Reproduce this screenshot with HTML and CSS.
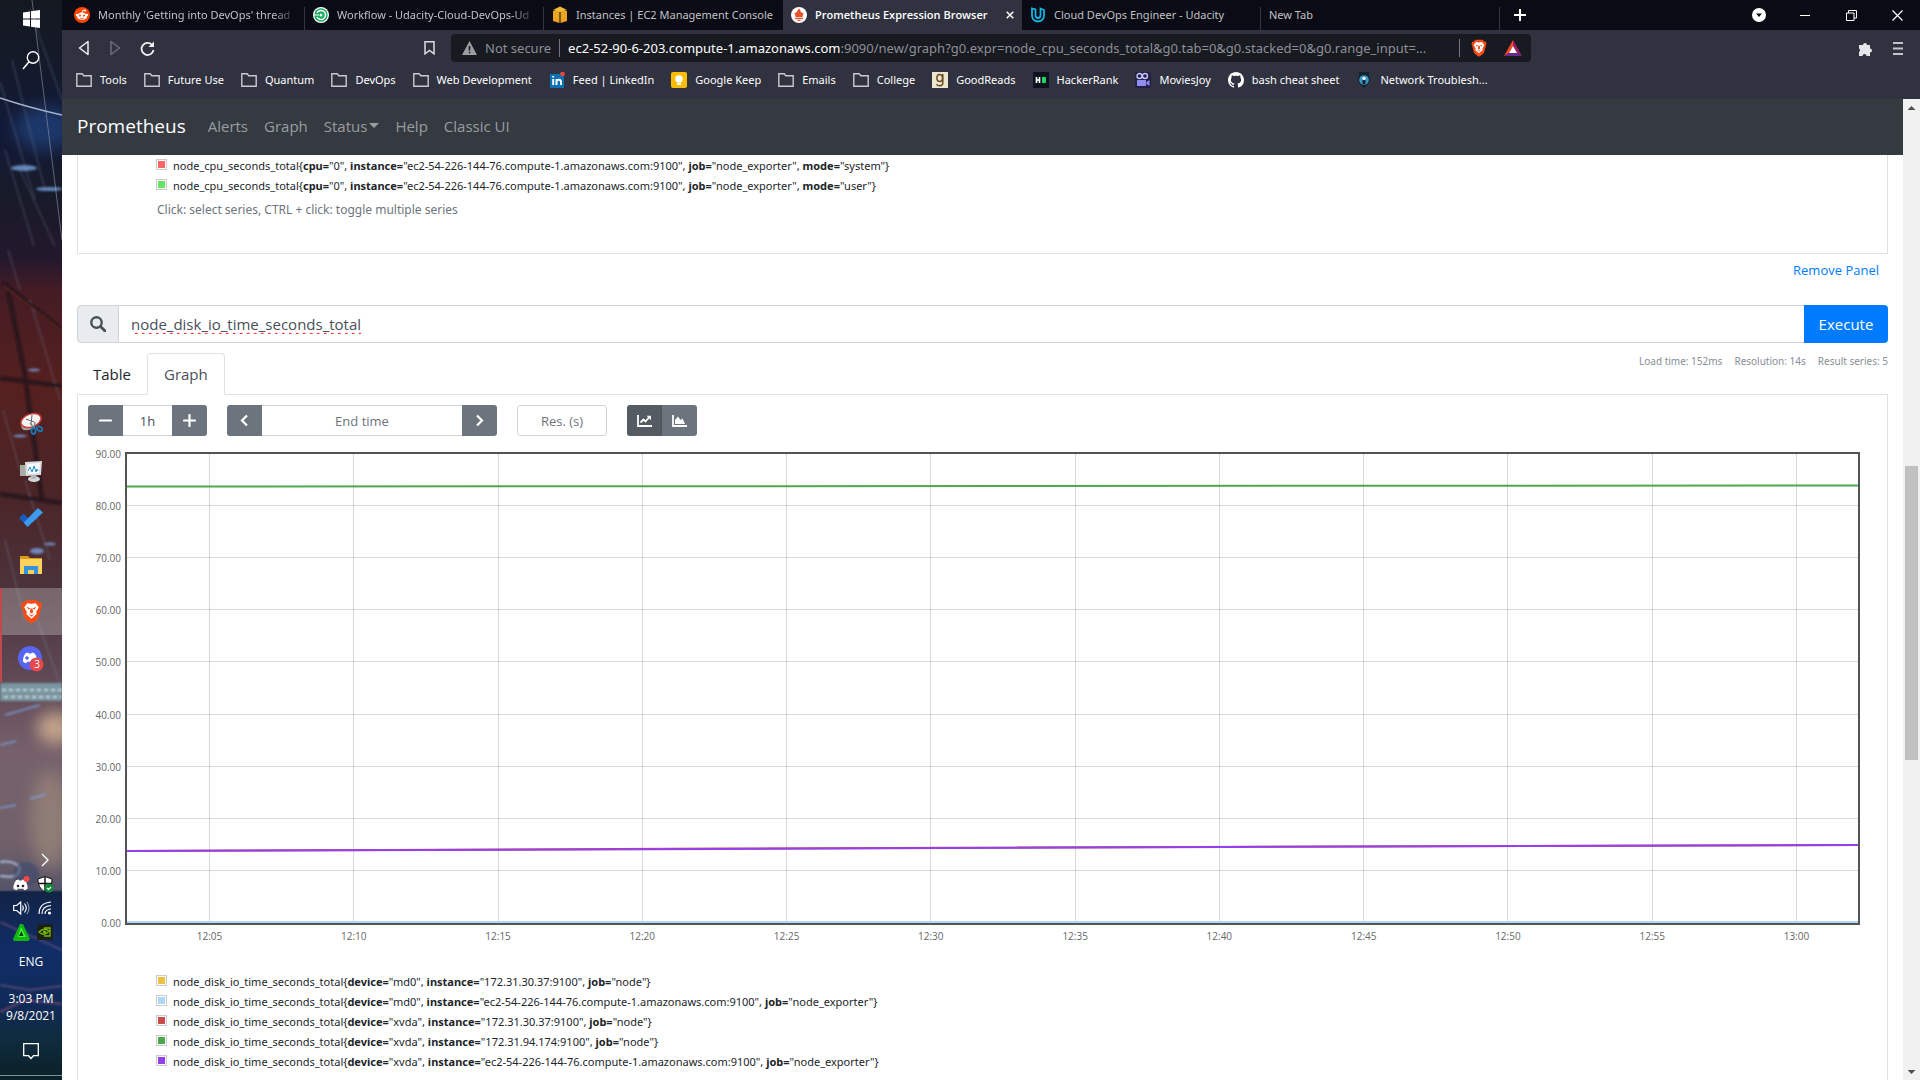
FILE: index.html
```html
<!DOCTYPE html>
<html lang="en">
<head>
<meta charset="utf-8">
<title>Prometheus Expression Browser</title>
<link rel="stylesheet" href="styles.css">
</head>
<body>
<svg class="defs" aria-hidden="true">
  <symbol id="folder" viewBox="0 0 16 16"><path d="M.8 14.2V1.8h5.4l1.6 2h7.4v10.4z" fill="none" stroke="#c8cad2" stroke-width="1.4"/></symbol>
  <symbol id="brave" viewBox="0 0 20 24"><path d="M5 1h10l2 2.500 2-.3 1 3-1 3-2 8-2 3-5 3.500-5-3.500-2-3-2-8-1-3 1-3 2 .3z" fill="#fb4b14"/><path d="M10 4.500 14 4l3 4-2.500 4.500.5 2L10 19l-5-4.500.5-2L3 8l3-4z" fill="#fff"/><path d="M5.500 7.500 9 9l-2 1zM14.500 7.500 11 9l2 1zM9 9h2l.5 4-1.500 1-1.500-1zM7 14l3 1.500 3-1.500-3 3z" fill="#fb4b14"/></symbol>
  <symbol id="discord" viewBox="0 0 20 16"><path d="M4 1.500 7.500.5 8.200 2h3.600l.7-1.500L16 1.500c2.500 3.500 3.500 7 3.500 11-1.500 1.300-3 2-4.500 2.500l-1.300-2H6.300L5 15c-1.500-.5-3-1.200-4.500-2.500 0-4 1-7.500 3.500-11z" fill="#fff"/></symbol>
</svg>
<div class="desktop">
  <aside class="taskbar">
    <svg class="wallpaper" viewBox="0 0 62 1080" preserveAspectRatio="none" aria-hidden="true">
      <defs>
        <linearGradient id="sky" x1="0" y1="0" x2="0" y2="1">
          <stop offset="0" stop-color="#141820"/><stop offset=".06" stop-color="#141a2a"/><stop offset=".12" stop-color="#131a38"/>
          <stop offset=".18" stop-color="#171a28"/><stop offset=".24" stop-color="#24182c"/><stop offset=".27" stop-color="#451c24"/>
          <stop offset=".36" stop-color="#55201f"/><stop offset=".46" stop-color="#4a2528"/><stop offset=".55" stop-color="#4c343c"/>
          <stop offset=".63" stop-color="#604a56"/><stop offset=".7" stop-color="#76616c"/><stop offset=".78" stop-color="#716069"/>
          <stop offset=".824" stop-color="#57546a"/><stop offset=".826" stop-color="#122446"/><stop offset=".88" stop-color="#112d68"/>
          <stop offset=".93" stop-color="#102a58"/><stop offset=".96" stop-color="#0f2c3e"/><stop offset="1" stop-color="#0b2029"/>
        </linearGradient>
        <filter id="soft" x="-50%" y="-50%" width="200%" height="200%"><feGaussianBlur stdDeviation="1"/></filter>
        <filter id="glow" x="-80%" y="-80%" width="260%" height="260%"><feGaussianBlur stdDeviation="8"/></filter>
      </defs>
      <rect width="62" height="1080" fill="url(#sky)"/>
      <ellipse cx="45" cy="128" rx="30" ry="22" fill="#234b8c" opacity=".6" filter="url(#glow)"/>
      <ellipse cx="55" cy="728" rx="18" ry="16" fill="#d9b795" opacity=".8" filter="url(#glow)"/>
      <ellipse cx="50" cy="820" rx="20" ry="50" fill="#a3907f" opacity=".6" filter="url(#glow)"/>
      <g filter="url(#soft)" fill="none">
        <path d="M0 82 35 200M12 60 45 190M30 10 62 100M5 150 34 246M20 170 55 246M8 250 20 290M30 300 60 400M3 410 20 470M25 480 50 560M30 600 62 690M5 540 25 620" stroke="#7e8fae" opacity=".28" stroke-width="1.500"/>
        <path d="M3 283 62 330M0 378 62 386M8 290 25 375 42 500M0 494 62 503" stroke="#171318" stroke-width="4" opacity=".75"/>
        <path d="M4 286 62 331" stroke="#7a3526" stroke-width="1"/>
        <path d="M0 692H62" stroke="#7895a1" stroke-width="18"/>
        <path d="M2 690H62M4 697H62" stroke="#c1d6da" stroke-width="2" stroke-dasharray="4 3"/>
        <path d="M5 715 40 705M0 745 16 741M0 808 16 805M30 799 46 794" stroke="#7e9fe0" stroke-width="2" opacity=".7"/>
        <path d="M0 862c14-2 22 4 19 10s-10 5-19 4" stroke="#a8bfd8" stroke-width="2"/>
        <ellipse cx="26" cy="874" rx="13" ry="12" fill="#3d4a6c" opacity=".6"/>
        <path d="M0 922 62 950M0 985 30 990 62 986" stroke="#b06d94" stroke-width="1" opacity=".8"/>
        <path d="M0 1012 25 1000 62 1004" stroke="#8c4d74" stroke-width="2" opacity=".7"/>
      </g>
      <path d="M32 0 62 240" stroke="#8f97a8" stroke-width="1" opacity=".6"/>
      <path d="M0 98Q30 108 62 115" stroke="#a9b2ca" stroke-width="1.500" fill="none"/>
      <g fill="#7ea8e8" opacity=".75" filter="url(#soft)"><ellipse cx="24" cy="168" rx="13" ry="3"/><ellipse cx="49" cy="189" rx="13" ry="2"/><ellipse cx="34" cy="370" rx="6" ry="1.500"/><ellipse cx="20" cy="436" rx="7" ry="1.500"/><ellipse cx="37" cy="551" rx="7" ry="3"/><ellipse cx="50" cy="544" rx="6" ry="1.500"/></g>
      <path d="M0 1075.500H62" stroke="#7e9095"/>
    </svg>
    <button class="task task-start" aria-label="Start"><svg width="17" height="20" viewBox="0 0 17 20"><path d="M0 3.500 7 2.400V9.500H0zM8 2.200 17 1v8.500H8zM0 10.500h7v7.100l-7-1.100zM8 10.500h9V19L8 17.800z" fill="#fff"/></svg></button>
    <button class="task task-search" aria-label="Search"><svg width="18" height="20" viewBox="0 0 18 20"><circle cx="11" cy="7.500" r="5.700" fill="none" stroke="#fff" stroke-width="1.400"/><path d="M7 11.800 1 19" stroke="#fff" stroke-width="1.500"/></svg></button>
    <div class="apps">
      <button class="task" aria-label="Snipping Tool"><svg width="24" height="24" viewBox="0 0 24 24"><path d="M2 13c0 7 8 6 12 3l7-8z" fill="#a8a4a6"/><ellipse cx="12" cy="8.500" rx="10.500" ry="6.500" transform="rotate(-20 12 8.500)" fill="#f4f4f4" stroke="#c93a37" stroke-width="1.500"/><path d="M7 7l8 3M13 3l-1 9" stroke="#666" fill="none"/><path d="M11 11l5 6M16 10l-1 7" stroke="#888" stroke-width="1.500"/><g fill="none" stroke="#1d77b5" stroke-width="1.800"><ellipse cx="14.500" cy="19" rx="2" ry="3"/><ellipse cx="20.500" cy="16.500" rx="3" ry="2" transform="rotate(35 20 17)"/></g></svg></button>
      <button class="task" aria-label="Resource Monitor"><svg width="24" height="24" viewBox="0 0 24 24"><path d="M1 6h6v11H1z" fill="#aaa"/><path d="M2 8h3" stroke="#7c4" stroke-width="1.500"/><path d="M6 3l17-1-1 14-15 1z" fill="#dadcdc"/><path d="M8 5l13-1-1 10-11 1z" fill="#f6fbff"/><path d="M9 12l2-4 2 5 2-6 2 6 1-3 1 2" fill="none" stroke="#2b8bc7"/><ellipse cx="15" cy="20" rx="6" ry="3" fill="#d4d6d8"/><path d="M12 16h5v4h-5z" fill="#b6b8ba"/></svg></button>
      <button class="task" aria-label="To Do"><svg width="24" height="20" viewBox="0 0 24 20"><path d="M0 10 4.500 5.500 13 14 8.500 19z" fill="#195abd"/><path d="M8.500 19 4.800 14.500 19 0 24 4.500z" fill="#3a9bf0"/></svg></button>
      <button class="task" aria-label="File Explorer"><svg width="22" height="18" viewBox="0 0 22 18"><path d="M0 0h8l2 2h12v5H0z" fill="#dc9a1a"/><path d="M0 3h22v15H0z" fill="#fbd35c"/><path d="M4 18v-8h14v8h-4v-4H8v4z" fill="#3492dc"/></svg></button>
      <button class="task task-active" aria-label="Brave"><svg width="21" height="25"><use href="#brave"/></svg></button>
      <button class="task task-open" aria-label="Discord"><svg width="26" height="26" viewBox="0 0 26 26"><circle cx="12" cy="12" r="12" fill="#5865f2"/><svg x="4" y="6" width="16" height="12"><use href="#discord"/></svg><circle cx="9" cy="12" r="1.800" fill="#5865f2"/><circle cx="18.500" cy="18.500" r="7" fill="#e5484d"/></svg><span class="badge">3</span></button>
    </div>
    <div class="tray">
      <button class="tray-icon tray-more" aria-label="Show hidden icons"><svg width="8" height="14" viewBox="0 0 8 14"><path d="M1 1l6 6-6 6" fill="none" stroke="#fff" stroke-width="1.400"/></svg></button>
      <button class="tray-icon" aria-label="Discord"><svg width="17" height="16" viewBox="0 0 17 16"><svg y="3" width="15" height="12"><use href="#discord"/></svg><circle cx="5" cy="10" r="1.300" fill="#223"/><circle cx="10" cy="10" r="1.300" fill="#223"/><circle cx="13.500" cy="3" r="3" fill="#f04747"/></svg></button>
      <button class="tray-icon" aria-label="Windows Security"><svg width="17" height="17" viewBox="0 0 17 17"><path d="M8 .5l7 2.500c0 6-2 10-7 13C3 13 1 9 1 3z" fill="#fff" stroke="#111"/><path d="M8 1v15M1 7.500h14" stroke="#111" stroke-width="1.500"/><circle cx="12" cy="12" r="4.500" fill="#10893e"/><path d="M10 12l1.500 1.500L14 11" fill="none" stroke="#fff" stroke-width="1.200"/></svg></button>
      <button class="tray-icon" aria-label="Volume"><svg width="17" height="14" viewBox="0 0 17 14"><path d="M.7 4.500h3l4-3.500v12l-4-3.500h-3zM9.500 4.500q1.500 2.500 0 5M11.500 2.500q3.500 4.500 0 9" fill="none" stroke="#fff" stroke-width="1.200"/><path d="M14 1q4 6 0 12" fill="none" stroke="#9ab" /></svg></button>
      <button class="tray-icon" aria-label="Network"><svg width="14" height="14" viewBox="0 0 14 14"><g fill="none" stroke="#fff" stroke-width="1.200"><path d="M1 13Q1 2 13 1M4 13Q4 5 13 4.500M7 13Q7 8.500 13 8"/></g><circle cx="11.500" cy="12" r="1.600" fill="#fff"/></svg></button>
      <button class="tray-icon" aria-label="Afterburner"><svg width="17" height="17" viewBox="0 0 17 17"><path d="M7 0h3l7 15-2 2H1l-1-2z" fill="#12b512"/><path d="M8 3l5 10H5z" fill="#3df53d"/><path d="M8.500 7l2 5H6z" fill="#063c0c"/></svg></button>
      <button class="tray-icon" aria-label="NVIDIA Settings"><svg width="16" height="16" viewBox="0 0 16 16"><path d="M0 0h16v16H0z" fill="#1c211b"/><path d="M2 8q5-5 10-1-5 6-10 1zM7 4h6v8H7" fill="none" stroke="#76b900" stroke-width="1.300"/><circle cx="7.500" cy="8" r="1.600" fill="#76b900"/></svg></button>
    </div>
    <button class="lang">ENG</button>
    <button class="clock"><span>3:03 PM</span><span>9/8/2021</span></button>
    <button class="notify" aria-label="Notifications"><svg width="16" height="17" viewBox="0 0 16 17"><path d="M.7.700h14.600v12H10.500L8 15.500 5.500 12.700H.7z" fill="none" stroke="#fff" stroke-width="1.300"/></svg></button>
  </aside>

  <div class="browser">
    <div class="tabstrip">
      <div class="tab"><svg width="16" height="16" viewBox="0 0 16 16"><circle cx="8" cy="8" r="8" fill="#ff4500"/><ellipse cx="8" cy="9.200" rx="5" ry="3.600" fill="#fff"/><circle cx="3.200" cy="8" r="1.300" fill="#fff"/><circle cx="12.800" cy="8" r="1.300" fill="#fff"/><circle cx="11" cy="3.500" r="1.100" fill="#fff"/><path d="M8 6l.8-2.800 2 .4" stroke="#fff" fill="none" stroke-width=".8"/><circle cx="6" cy="8.600" r="1" fill="#ff4500"/><circle cx="10" cy="8.600" r="1" fill="#ff4500"/><path d="M6 11q2 1 4 0" stroke="#ff4500" fill="none" stroke-width=".8"/></svg><span class="tab-title tab-fade">Monthly 'Getting into DevOps' thread</span></div>
      <div class="tab"><svg width="16" height="16" viewBox="0 0 16 16"><circle cx="8" cy="8" r="8" fill="#fff"/><circle cx="8" cy="8" r="6.700" fill="#12a85c"/><path d="M4 6a4.500 4.500 0 1 1 0 4" fill="none" stroke="#fff" stroke-width="1.500"/><path d="M1 8h5" stroke="#fff" stroke-width="1"/><circle cx="8" cy="8" r="1.500" fill="#fff"/></svg><span class="tab-title tab-fade">Workflow - Udacity-Cloud-DevOps-Ud</span></div>
      <div class="tab"><svg width="16" height="18" viewBox="0 0 16 18"><path d="M1 5l6.500-1v13L1 15zM15 5 8.500 4v13l6.500-2z" fill="#eda420"/><path d="M1 4l7-3.500L15 4 8 6z" fill="#f6b93a"/></svg><span class="tab-title">Instances | EC2 Management Console</span></div>
      <div class="tab tab-active"><svg width="16" height="16" viewBox="0 0 16 16"><circle cx="8" cy="8" r="8" fill="#fff"/><path d="M8 1.500c2 2 1 3 3 4.500l1.500-.5-1 4.500h-7l-1-4.500 1.500.5C5.500 5 6.500 4 8 1.500zM4 10.800h8v1.200H4zM5.500 12.700h5q-2.500 2.500-5 0z" fill="#e6522c"/></svg><span class="tab-title">Prometheus Expression Browser</span><button class="tab-close" aria-label="Close tab"><svg width="8" height="8" viewBox="0 0 8 8"><path d="M.7.700l6.600 6.600M7.300.7.700 7.300" stroke="#fff" stroke-width="1.500"/></svg></button></div>
      <div class="tab"><svg width="16" height="16" viewBox="0 0 16 16"><path d="M2 1.500v6.500q0 6 6 6.500 6-.5 6-6.500V3l-3.500-1.500V8q0 3-2.500 3T5.500 8V2.500z" fill="none" stroke="#17b3e0" stroke-width="1.800"/></svg><span class="tab-title">Cloud DevOps Engineer - Udacity</span></div>
      <div class="tab tab-new"><span class="tab-title">New Tab</span></div>
      <button class="icon-button add-tab" aria-label="New tab"><svg width="12" height="12" viewBox="0 0 12 12"><path d="M6 0v12M0 6h12" stroke="#fff" stroke-width="2"/></svg></button>
      <div class="window-buttons">
        <button class="icon-button" aria-label="Search tabs"><svg width="14" height="14" viewBox="0 0 14 14"><circle cx="7" cy="7" r="7" fill="#fff"/><path d="M4 5.500h6L7 9z" fill="#0a0b14"/></svg></button>
        <button class="icon-button" aria-label="Minimize"><svg width="10" height="10" viewBox="0 0 10 10"><path d="M0 5.500h10" stroke="#fff"/></svg></button>
        <button class="icon-button" aria-label="Restore"><svg width="11" height="11" viewBox="0 0 11 11"><path d="M.5 3h7.500v7.500H.5zM2.500 3V.5h8V8H8" fill="none" stroke="#fff"/></svg></button>
        <button class="icon-button" aria-label="Close"><svg width="11" height="11" viewBox="0 0 11 11"><path d="M.5.500l10 10M10.500.5l-10 10" stroke="#fff" stroke-width="1.200"/></svg></button>
      </div>
    </div>

    <div class="toolbar">
      <div class="history">
        <button class="icon-button" aria-label="Back"><svg width="12" height="16" viewBox="0 0 12 16"><path d="M10 1.500v13L1.500 8z" fill="none" stroke="#f0f0f2" stroke-width="1.500" stroke-linejoin="round"/></svg></button>
        <button class="icon-button" aria-label="Forward"><svg width="12" height="16" viewBox="0 0 12 16"><path d="M2 1.500v13L10.500 8z" fill="none" stroke="#6c6e7c" stroke-width="1.500" stroke-linejoin="round"/></svg></button>
        <button class="icon-button" aria-label="Reload"><svg width="15" height="15" viewBox="0 0 15 15"><path d="M12.500 4.500A6 6 0 1 0 13.500 9" fill="none" stroke="#f0f0f2" stroke-width="1.800"/><path d="M8.500 6H14V.5z" fill="#f0f0f2"/></svg></button>
      </div>
      <button class="icon-button bookmark-page" aria-label="Bookmark this page"><svg width="11" height="14" viewBox="0 0 11 14"><path d="M1 .8h9v12L5.500 9.500 1 12.800z" fill="none" stroke="#dcdce2" stroke-width="1.500"/></svg></button>
      <div class="address">
        <svg width="15" height="14" viewBox="0 0 15 14"><path d="M7.500 0 15 14H0z" fill="#9c9da2"/><path d="M7.500 5v4.500M7.500 10.800v1.500" stroke="#171a21" stroke-width="1.600"/></svg>
        <span class="insecure">Not secure</span>
        <span class="url"><b>ec2-52-90-6-203.compute-1.amazonaws.com</b>:9090/new/graph?g0.expr=node_cpu_seconds_total&amp;g0.tab=0&amp;g0.stacked=0&amp;g0.range_input=...</span>
        <button class="icon-button" aria-label="Brave Shields"><svg width="16" height="18"><use href="#brave"/></svg></button>
        <button class="icon-button" aria-label="Brave Rewards"><svg width="18" height="16" viewBox="0 0 18 16"><path d="M9 0v6l-4 7-5 3z" fill="#ff4724"/><path d="M9 0v6l4 7 5 3z" fill="#9e1f63"/><path d="M0 16l5-3h8l5 3z" fill="#662d91"/><path d="M9 6l4 7H5z" fill="#fff"/></svg></button>
      </div>
      <div class="toolbar-end">
        <button class="icon-button" aria-label="Extensions"><svg width="15" height="15" viewBox="0 0 15 15"><path d="M1 4h4a2 2 0 1 1 4 0h3v3.500a2 2 0 1 1 0 4V15H8.500a2 2 0 0 0-4 0H1v-4a2 2 0 0 0 0-3.500z" fill="#e6e6ea"/></svg></button>
        <button class="icon-button" aria-label="Menu"><svg width="10" height="13" viewBox="0 0 10 13"><path d="M0 1h10M0 6.500h10M0 12h10" stroke="#c3c4ca" stroke-width="2"/></svg></button>
      </div>
    </div>

    <nav class="bookmarks">
      <a href="#"><svg><use href="#folder"/></svg>Tools</a>
      <a href="#"><svg><use href="#folder"/></svg>Future Use</a>
      <a href="#"><svg><use href="#folder"/></svg>Quantum</a>
      <a href="#"><svg><use href="#folder"/></svg>DevOps</a>
      <a href="#"><svg><use href="#folder"/></svg>Web Development</a>
      <a href="#"><svg viewBox="0 0 16 16"><path d="M1 2h14v14H1z" fill="#0a71b5"/><path d="M4.200 7v6M4.200 4v1.600M7.500 7v6M7.500 10c0-3 4.500-3 4.500 0v3" fill="none" stroke="#fff" stroke-width="1.900"/><circle cx="13.500" cy="2" r="2.300" fill="#ef4444"/></svg>Feed | LinkedIn</a>
      <a href="#"><svg viewBox="0 0 16 16"><rect width="16" height="16" rx="2" fill="#fbbc04"/><circle cx="8" cy="7" r="3.800" fill="#fff"/><path d="M6 11h4v2H6z" fill="#fff"/></svg>Google Keep</a>
      <a href="#"><svg><use href="#folder"/></svg>Emails</a>
      <a href="#"><svg><use href="#folder"/></svg>College</a>
      <a href="#"><svg viewBox="0 0 16 16"><path d="M0 0h16v16H0z" fill="#ece6cf"/><ellipse cx="7.700" cy="6" rx="2.800" ry="3.500" fill="none" stroke="#6b4c24" stroke-width="1.500"/><path d="M10.800 2v9c0 3.500-5.800 3.500-6 1" fill="none" stroke="#6b4c24" stroke-width="1.500"/></svg>GoodReads</a>
      <a href="#"><svg viewBox="0 0 16 16"><path d="M0 0h16v16H0z" fill="#0d141f"/><path d="M3.500 5v6M6.500 5v6M3 8h4" stroke="#fff" stroke-width="1.600"/><path d="M9 5h4v6H9z" fill="#1ed361"/></svg>HackerRank</a>
      <a href="#"><svg viewBox="0 0 16 16"><rect width="16" height="16" rx="3" fill="#241f44"/><circle cx="4.500" cy="4" r="2.500" fill="none" stroke="#c6c4ff" stroke-width="1.400"/><circle cx="10" cy="4" r="2.500" fill="none" stroke="#c6c4ff" stroke-width="1.400"/><path d="M2 8h9v6H2zM11.500 10l3-2v6l-3-2z" fill="#8f8cf0"/></svg>MoviesJoy</a>
      <a href="#"><svg viewBox="0 0 16 16"><path d="M8 0C3.580 0 0 3.580 0 8c0 3.540 2.290 6.530 5.470 7.590.4.070.55-.17.55-.38 0-.19-.01-.82-.01-1.490-2.010.37-2.530-.49-2.690-.94-.09-.23-.48-.94-.82-1.130-.28-.15-.68-.52-.01-.53.63-.01 1.080.58 1.230.82.72 1.210 1.870.87 2.330.66.07-.52.28-.87.51-1.070-1.780-.2-3.640-.89-3.640-3.950 0-.87.31-1.590.82-2.150-.08-.2-.36-1.020.08-2.120 0 0 .67-.21 2.200.82.64-.18 1.320-.27 2-.27s1.360.09 2 .27c1.530-1.040 2.200-.82 2.200-.82.44 1.100.16 1.920.08 2.120.51.56.82 1.270.82 2.150 0 3.070-1.870 3.750-3.650 3.950.29.25.54.73.54 1.480 0 1.070-.01 1.930-.01 2.200 0 .21.15.46.55.38A8.010 8.010 0 0 0 16 8c0-4.420-3.580-8-8-8z" fill="#fff"/></svg>bash cheat sheet</a>
      <a href="#"><svg viewBox="0 0 16 16"><path d="M3 0h10v4l1 3-1 4-5 5-5-5-1-4 1-3z" fill="#13212c"/><circle cx="8" cy="8" r="4.800" fill="#3798c4"/><path d="M6.500 12V7h3v5z" fill="#13212c"/><circle cx="8" cy="6.500" r="1.800" fill="#dff4ff"/></svg>Network Troublesh...</a>
    </nav>

    <div class="viewport">
      <div class="page">
        <nav class="navbar">
          <a class="brand" href="#">Prometheus</a>
          <a href="#">Alerts</a>
          <a href="#">Graph</a>
          <a class="dropdown" href="#">Status</a>
          <a href="#">Help</a>
          <a href="#">Classic UI</a>
        </nav>
        <main class="content">
          <section class="card card-top">
            <ul class="legend">
              <li><i class="swatch coral"></i><span>node_cpu_seconds_total{<b>cpu=</b>"0", <b>instance=</b>"ec2-54-226-144-76.compute-1.amazonaws.com:9100", <b>job=</b>"node_exporter", <b>mode=</b>"system"}</span></li>
              <li><i class="swatch lime"></i><span>node_cpu_seconds_total{<b>cpu=</b>"0", <b>instance=</b>"ec2-54-226-144-76.compute-1.amazonaws.com:9100", <b>job=</b>"node_exporter", <b>mode=</b>"user"}</span></li>
            </ul>
            <p class="hint">Click: select series, CTRL + click: toggle multiple series</p>
          </section>
          <div class="panel-actions"><button class="remove">Remove Panel</button></div>

          <form class="query">
            <label class="query-icon" for="expr"><svg width="16" height="16" viewBox="0 0 16 16"><circle cx="6.500" cy="6.500" r="5.200" fill="none" stroke="#495057" stroke-width="2.400"/><path d="M10.500 10.500 15 15" stroke="#495057" stroke-width="2.800" stroke-linecap="round"/></svg></label>
            <input id="expr" type="text" value="node_disk_io_time_seconds_total" aria-label="Expression">
            <button class="execute" type="button">Execute</button>
          </form>

          <div class="tabs-row">
            <div class="view-tabs">
              <a href="#">Table</a>
              <a class="active" href="#">Graph</a>
            </div>
            <div class="stats"><span>Load time: 152ms</span><span>Resolution: 14s</span><span>Result series: 5</span></div>
          </div>

          <section class="card graph-card">
            <div class="controls">
              <div class="group">
                <button aria-label="Decrease range"><svg width="13" height="13" viewBox="0 0 13 13"><path d="M1 6.500h11" stroke="#fff" stroke-width="2.200" stroke-linecap="round"/></svg></button>
                <input class="range" type="text" value="1h" aria-label="Range">
                <button aria-label="Increase range"><svg width="13" height="13" viewBox="0 0 13 13"><path d="M1 6.500h11M6.500 1v11" stroke="#fff" stroke-width="2.200" stroke-linecap="round"/></svg></button>
              </div>
              <div class="group">
                <button aria-label="Earlier"><svg width="13" height="13" viewBox="0 0 13 13"><path d="M9 1.500l-5 5 5 5" fill="none" stroke="#fff" stroke-width="2.200"/></svg></button>
                <input class="end-time" type="text" placeholder="End time" aria-label="End time">
                <button aria-label="Later"><svg width="13" height="13" viewBox="0 0 13 13"><path d="M4 1.500l5 5-5 5" fill="none" stroke="#fff" stroke-width="2.200"/></svg></button>
              </div>
              <div class="group"><input class="resolution" type="text" placeholder="Res. (s)" aria-label="Resolution in seconds"></div>
              <div class="group">
                <button class="pressed" aria-label="Line graph"><svg width="15" height="12" viewBox="0 0 15 12"><path d="M1 0v11h14" fill="none" stroke="#fff" stroke-width="1.800"/><path d="M3.500 7.500 6.500 4.500l2 2 3.500-4" fill="none" stroke="#fff" stroke-width="1.800"/><path d="M9.500.800H14v4.500z" fill="#fff"/></svg></button>
                <button aria-label="Stacked graph"><svg width="15" height="12" viewBox="0 0 15 12"><path d="M1 0v11h14" fill="none" stroke="#fff" stroke-width="1.800"/><path d="M3 9V5l3-3.500L8.500 5l2-1.500L13 9z" fill="#fff"/></svg></button>
              </div>
            </div>

            <svg class="chart" role="img" aria-label="Disk IO time over one hour">
              <g class="grid">
                <line x1="4.82%" x2="4.82%" y2="100%"/><line x1="13.14%" x2="13.14%" y2="100%"/><line x1="21.47%" x2="21.47%" y2="100%"/><line x1="29.79%" x2="29.79%" y2="100%"/><line x1="38.12%" x2="38.12%" y2="100%"/><line x1="46.44%" x2="46.44%" y2="100%"/><line x1="54.77%" x2="54.77%" y2="100%"/><line x1="63.09%" x2="63.09%" y2="100%"/><line x1="71.42%" x2="71.42%" y2="100%"/><line x1="79.74%" x2="79.74%" y2="100%"/><line x1="88.07%" x2="88.07%" y2="100%"/><line x1="96.39%" x2="96.39%" y2="100%"/>
                <line x2="100%" y1="52.5" y2="52.5"/><line x2="100%" y1="104.5" y2="104.5"/><line x2="100%" y1="156.5" y2="156.5"/><line x2="100%" y1="208.5" y2="208.5"/><line x2="100%" y1="261.5" y2="261.5"/><line x2="100%" y1="313.5" y2="313.5"/><line x2="100%" y1="365.5" y2="365.5"/><line x2="100%" y1="417.5" y2="417.5"/>
              </g>
              <rect class="frame" width="100%" height="100%"/>
              <svg width="100%" height="471" viewBox="0 0 1734 471" preserveAspectRatio="none">
                <path class="series" stroke="#b0d8f5" d="M1 469H1733"/>
                <path class="series" stroke="#cb4b4b" d="M1 398 600 395.500 1733 392"/>
                <path class="series" stroke="#4da74d" d="M1 33.500 1733 32.500"/>
                <path class="series" stroke="#9440ed" d="M1 398 300 397 600 396 1100 394 1733 392"/>
              </svg>
              <g class="y-labels"><text x="-5" y="5">90.00</text><text x="-5" y="57">80.00</text><text x="-5" y="109">70.00</text><text x="-5" y="161">60.00</text><text x="-5" y="213">50.00</text><text x="-5" y="266">40.00</text><text x="-5" y="318">30.00</text><text x="-5" y="370">20.00</text><text x="-5" y="422">10.00</text><text x="-5" y="474">0.00</text></g>
              <g class="x-labels"><text x="4.82%" y="487">12:05</text><text x="13.14%" y="487">12:10</text><text x="21.47%" y="487">12:15</text><text x="29.79%" y="487">12:20</text><text x="38.12%" y="487">12:25</text><text x="46.44%" y="487">12:30</text><text x="54.77%" y="487">12:35</text><text x="63.09%" y="487">12:40</text><text x="71.42%" y="487">12:45</text><text x="79.74%" y="487">12:50</text><text x="88.07%" y="487">12:55</text><text x="96.39%" y="487">13:00</text></g>
            </svg>

            <ul class="legend">
              <li><i class="swatch gold"></i><span>node_disk_io_time_seconds_total{<b>device=</b>"md0", <b>instance=</b>"172.31.30.37:9100", <b>job=</b>"node"}</span></li>
              <li><i class="swatch sky"></i><span>node_disk_io_time_seconds_total{<b>device=</b>"md0", <b>instance=</b>"ec2-54-226-144-76.compute-1.amazonaws.com:9100", <b>job=</b>"node_exporter"}</span></li>
              <li><i class="swatch red"></i><span>node_disk_io_time_seconds_total{<b>device=</b>"xvda", <b>instance=</b>"172.31.30.37:9100", <b>job=</b>"node"}</span></li>
              <li><i class="swatch green"></i><span>node_disk_io_time_seconds_total{<b>device=</b>"xvda", <b>instance=</b>"172.31.94.174:9100", <b>job=</b>"node"}</span></li>
              <li><i class="swatch purple"></i><span>node_disk_io_time_seconds_total{<b>device=</b>"xvda", <b>instance=</b>"ec2-54-226-144-76.compute-1.amazonaws.com:9100", <b>job=</b>"node_exporter"}</span></li>
            </ul>
          </section>
        </main>
      </div>
      <div class="scrollbar" aria-hidden="true">
        <span class="arrow arrow-up"></span>
        <div class="track"><div class="thumb"></div></div>
        <span class="arrow arrow-down"></span>
      </div>
    </div>
  </div>
</div>
</body>
</html>
```
FILE: styles.css
```css
*, *::before, *::after { box-sizing: border-box; }
body { margin: 0; font-family: "Open Sans", "Noto Sans", sans-serif; font-size: 15px; color: #212529; background: #fff; }
button, input { font: inherit; color: inherit; margin: 0; padding: 0; border: 0; background: none; border-radius: 0; }
a { color: inherit; text-decoration: none; }
ul { list-style: none; margin: 0; padding: 0; }
p { margin: 0; }
svg { flex: none; display: block; }
.defs { position: absolute; width: 0; height: 0; }

.desktop { display: grid; grid-template: minmax(0, 1fr) / 62px minmax(0, 1fr); height: 100vh; overflow: hidden; }

/* Taskbar */
.taskbar { position: relative; display: flex; flex-direction: column; color: #fff; font-size: 12px; overflow: hidden; }
.wallpaper { position: absolute; inset: 0; width: 100%; height: 100%; }
.taskbar > button, .apps, .tray { position: relative; }
.task { display: flex; align-items: center; justify-content: center; width: 100%; height: 47px; flex: none; position: relative; }
.task-start { height: 38px; }
.task-search { height: 44px; }
.taskbar::before { content: ""; order: 1; flex: 23; }
.apps { order: 2; }
.taskbar::after { content: ""; order: 3; flex: 12; }
.tray, .lang, .clock, .notify { order: 4; flex: none; }
.task-active { background: rgba(255, 255, 255, .25); }
.task-active, .task-open { border-left: 2px solid #c0494d; padding-right: 2px; }
.badge { position: absolute; left: 28px; top: 22px; width: 14px; font-size: 10px; line-height: 14px; text-align: center; }
.tray { display: grid; grid-template-columns: 24px 24px; justify-content: center; grid-auto-rows: 24px; padding-left: 4px; }
.tray-icon { display: flex; align-items: center; justify-content: center; }
.tray-more { grid-column: 2; }
.taskbar > .lang { height: 34px; }
.taskbar > .clock { display: flex; flex-direction: column; justify-content: center; align-items: center; height: 58px; line-height: 17px; }
.taskbar > .notify { display: flex; align-items: center; justify-content: center; height: 30px; margin-bottom: 14px; }

/* Browser chrome */
.browser { display: flex; flex-direction: column; min-width: 0; background: #303240; color: #fff; font-size: 12px; }
.icon-button { display: flex; align-items: center; justify-content: center; }
.tabstrip, .address, .bookmarks, .legend, .stats, .hint { font-family: "Noto Sans", "Open Sans", sans-serif; }
.tabstrip { display: flex; height: 30px; padding-left: 4px; background: #0a0b14; color: #c0c1c6; flex: none; }
.tab { display: flex; align-items: center; gap: 8px; flex: 0 1 239px; min-width: 0; padding: 0 8px; position: relative; }
.tab::after { content: ""; position: absolute; right: 0; top: 7px; bottom: 0; border-right: 1px solid #34353f; }
.tab:nth-child(3)::after { display: none; }
.tab-title { flex: 1; min-width: 0; white-space: nowrap; overflow: hidden; line-height: 18px; font-size: 11px; }
.tab-fade { -webkit-mask-image: linear-gradient(90deg, #000 88%, transparent); mask-image: linear-gradient(90deg, #000 88%, transparent); }
.tab-active { background: #303240; color: #fff; }
.tab-active .tab-title { font-family: "Open Sans", "Noto Sans", sans-serif; font-weight: 600; }
.tab-active::after { display: none; }
.add-tab { width: 40px; }
.window-buttons { display: flex; margin-left: auto; }
.window-buttons .icon-button { width: 46px; }

.toolbar { display: flex; height: 36px; align-items: center; flex: none; padding-right: 17px; }
.history { display: flex; align-items: center; gap: 19px; padding-left: 16px; width: 360px; }
.bookmark-page { width: 14px; margin-right: 15px; }
.address { display: flex; align-items: center; flex: 0 1 1080px; min-width: 0; height: 28px; padding: 0 9px 0 11px; border-radius: 4px; background: #171a21; font-size: 13px; color: #8e9096; }
.insecure { margin: 0 8px; padding-right: 8px; border-right: 1px solid #74767c; line-height: 18px; white-space: nowrap; }
.url { flex: 1; min-width: 0; white-space: nowrap; overflow: hidden; line-height: 18px; border-right: 1px solid #74767c; margin-right: 11px; }
.url b { color: #fff; font-weight: 400; }
.address .icon-button + .icon-button { margin-left: 17px; }
.toolbar-end { display: flex; gap: 20px; margin-left: auto; }

.bookmarks { display: flex; align-items: center; gap: 17px; height: 33px; padding: 0 14px 6px; flex: none; font-size: 11px; white-space: nowrap; overflow: hidden; }
.bookmarks a { display: flex; align-items: center; gap: 8px; }
.bookmarks svg { width: 16px; height: 16px; }

/* Page */
.viewport { display: flex; flex: 1; min-height: 0; background: #fff; color: #212529; font-size: 15px; }
.page { flex: 1; min-width: 0; overflow: hidden; }
.navbar { display: flex; align-items: center; gap: 16px; height: 56px; padding: 0 15px 2px; background: #343a40; color: #9a9da0; }
.brand { color: #fff; font-size: 19px; margin-right: 6px; }
.dropdown::after { content: ""; display: inline-block; margin-left: 2px; vertical-align: 4px; border: 5px solid transparent; border-top-color: currentColor; border-bottom: 0; }
.content { padding: 0 15px; }
.card { border: 1px solid #dee2e6; border-top: 0; }
.card-top { height: 99px; padding-left: 10px; }
.legend { padding: 1px 0 0 68px; font-size: 11px; line-height: 20px; }
.legend li { display: flex; gap: 6px; white-space: nowrap; }
.swatch { width: 11px; height: 11px; margin-top: 3px; border: 1px solid #ccc; padding: 1px; background-clip: content-box; flex: none; }
.coral { background-color: #ff6464; } .lime { background-color: #64e664; }
.gold { background-color: #edc240; } .sky { background-color: #afd8f8; } .red { background-color: #cb4b4b; } .green { background-color: #4da74d; } .purple { background-color: #9440ed; }
.hint { padding: 5px 0 0 69px; font-size: 12px; line-height: 18px; color: #6c757d; }
.panel-actions { display: flex; justify-content: flex-end; height: 51px; padding: 5px 9px 0; }
.remove { height: 21px; font-size: 13px; color: #007bff; }

.query { display: flex; height: 38px; }
.query-icon { display: flex; align-items: center; justify-content: center; width: 42px; background: #e9ecef; border: 1px solid #ced4da; border-radius: 4px 0 0 4px; }
.query input { flex: 1; min-width: 0; padding: 0 12px; border: 1px solid #ced4da; border-width: 1px 0; color: #495057; text-decoration: underline wavy #f00 1px; text-underline-offset: 2px; text-decoration-skip-ink: none; }
.execute { width: 84px; background: #007bff; color: #fff; border-radius: 0 4px 4px 0; }

.tabs-row { display: flex; justify-content: space-between; padding-top: 10px; border-bottom: 1px solid #dee2e6; height: 52px; }
.view-tabs { display: flex; height: 42px; }
.view-tabs a { display: flex; align-items: center; padding: 0 15px; border: 1px solid transparent; border-radius: 4px 4px 0 0; }
.view-tabs .active { padding: 0 16px; background: #fff; color: #495057; border-color: #dee2e6; border-bottom-color: #fff; }
.stats { display: flex; gap: 12px; font-size: 10px; line-height: 16px; color: #868e96; }

.graph-card { padding: 10px 10px 40px; }
.controls { display: flex; gap: 20px; font-size: 13px; padding-bottom: 17px; }
.group { display: flex; height: 31px; border-radius: 3px; overflow: hidden; }
.group button { display: flex; align-items: center; justify-content: center; width: 35px; background: #6c757d; }
.group .pressed { background: #545b62; border-right: 1px solid #4e555b; }
.group input { border: 1px solid #ced4da; border-width: 1px 0; text-align: center; color: #495057; }
.group input::placeholder { color: #6c757d; opacity: 1; }
.group .range { width: 49px; }
.group .end-time { width: 200px; }
.group .resolution { width: 90px; border-width: 1px; border-radius: 3px; }

.chart { width: calc(100% - 56px); height: 471px; margin: 0 18px 47px 38px; overflow: visible; font-size: 10px; }
.grid line { stroke: rgba(0, 0, 0, .15); shape-rendering: crispEdges; }
.frame { fill: none; stroke: #545454; stroke-width: 2; }
.series { fill: none; stroke-width: 2; vector-effect: non-scaling-stroke; }
.chart text { fill: #666; }
.y-labels { text-anchor: end; }
.x-labels { text-anchor: middle; }

.scrollbar { display: flex; flex-direction: column; align-items: center; width: 17px; background: #f1f1f1; }
.track { flex: 1; width: 13px; display: flex; flex-direction: column; }
.track::before { content: ""; flex: 37; }
.thumb { flex: 31; background: #c1c1c1; }
.track::after { content: ""; flex: 32; }
.arrow { width: 8px; height: 4px; margin: 7px 0 6px; background: #505050; clip-path: polygon(50% 0, 100% 100%, 0 100%); }
.arrow-down { clip-path: polygon(0 0, 100% 0, 50% 100%); }
```
